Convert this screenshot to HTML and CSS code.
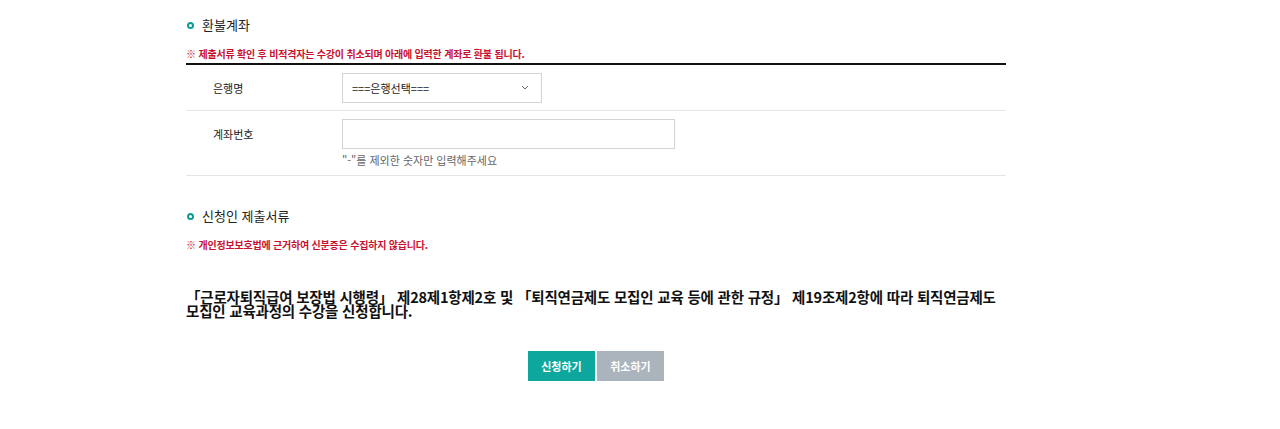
FILE: index.html
```html
<!DOCTYPE html>
<html lang="ko">
<head>
  <meta charset="UTF-8">
  <title>수강신청 - 환불계좌</title>
  <link rel="stylesheet" href="styles.css">
</head>
<body>
  <div class="wrap">
    <h3 class="sub-title">환불계좌</h3>
    <p class="notice">※ 제출서류 확인 후 비적격자는 수강이 취소되며 아래에 입력한 계좌로 환불 됩니다.</p>

    <div class="form-table">
      <div class="form-row bank">
        <div class="label">은행명</div>
        <div class="field">
          <div class="select">
            <span>===은행선택===</span>
            <svg width="8" height="5" viewBox="0 0 8 5"><path d="M1 1l3 3 3-3" fill="none" stroke="#666" stroke-width="1"/></svg>
          </div>
        </div>
      </div>
      <div class="form-row account">
        <div class="label">계좌번호</div>
        <div class="field">
          <input type="text" class="text-input">
          <p class="hint">"-"를 제외한 숫자만 입력해주세요</p>
        </div>
      </div>
    </div>

    <h3 class="sub-title second">신청인 제출서류</h3>
    <p class="notice">※ 개인정보보호법에 근거하여 신분증은 수집하지 않습니다.</p>

    <p class="agree">「근로자퇴직급여 보장법 시행령」 제28제1항제2호 및 「퇴직연금제도 모집인 교육 등에 관한 규정」 제19조제2항에 따라 퇴직연금제도 모집인 교육과정의 수강을 신청합니다.</p>

    <div class="btn-area">
      <button class="btn submit">신청하기</button>
      <button class="btn cancel">취소하기</button>
    </div>
  </div>
</body>
</html>
```

FILE: styles.css
```css
body { margin: 0; background: #fff; font-family: "Noto Sans CJK KR", "Noto Sans", sans-serif; color: #222; }
.wrap { width: 820px; margin-left: 186px; padding-top: 16px; }

.sub-title {
  display: flex; align-items: center; gap: 8px;
  margin: 0; font-size: 13px; font-weight: 400; line-height: 18px; color: #222;
}
.sub-title::before {
  content: ""; width: 3px; height: 3px; border: 2px solid #0c9c95; border-radius: 50%;
  margin-left: 1px;
}
.sub-title.second { margin-top: 31px; }

.notice { margin: 13px 0 0; font-size: 10px; font-weight: 700; line-height: 14px; color: #c8102e; letter-spacing: -0.2px; }

.form-table { border-top: 2px solid #111; margin-top: 2px; }
.form-row { display: flex; border-bottom: 1px solid #e6e6e6; }
.form-row .label { width: 129px; padding-left: 27px; font-size: 11px; color: #222; }
.form-row.bank { height: 45px; align-items: center; }
.form-row.account { padding: 8px 0 7px; }
.form-row.account .label { padding-top: 7px; line-height: 16px; }

.select {
  display: flex; align-items: center; justify-content: space-between;
  width: 177px; height: 28px; padding: 0 12px 0 9px;
  border: 1px solid #d4d4d4; font-size: 11px; color: #222;
}
.text-input { display: block; box-sizing: border-box; width: 333px; height: 30px; margin: 0; border: 1px solid #d4d4d4; }
.hint { margin: 3px 0 0; font-size: 11px; line-height: 16px; color: #666; }

.agree {
  margin: 38px 0 0; font-size: 14.5px; font-weight: 700; line-height: 14px; color: #111;
  letter-spacing: -0.2px; word-break: keep-all;
}

.btn-area { display: flex; justify-content: center; gap: 2px; margin-top: 33px; }
.btn { width: 67px; height: 30px; border: 0; font-family: inherit; font-size: 11px; font-weight: 700; color: #fff; }
.submit { background: #0ea79d; }
.cancel { background: #abb3bd; }
```
